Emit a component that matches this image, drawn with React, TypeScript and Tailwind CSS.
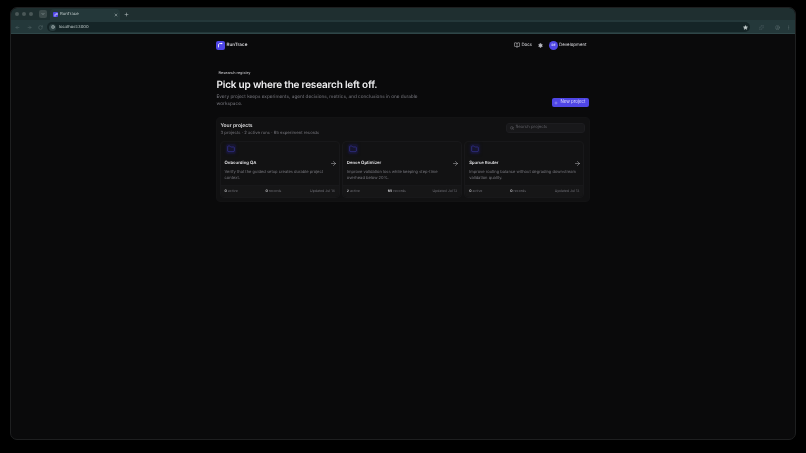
import React from "react";
import { ArrowRight, BookOpen, Folder, Plus, Search, Settings, Star, Globe, MoreVertical, RotateCw, ArrowLeft, X, ChevronDown, Puzzle, CircleUser } from "lucide-react";

const Logo = ({ s = "w-[9px] h-[9px]" }: { s?: string }) => (
  <svg viewBox="0 0 12 12" className={s} fill="none" stroke="white" strokeWidth="1.6" strokeLinecap="round">
    <path d="M3 10V6" />
    <path d="M3 6c0-2 1-3 3-3h3" />
    <circle cx="9" cy="3" r="0.6" fill="white" />
  </svg>
);

const projects = [
  { name: "Onboarding QA", desc: "Verify that the guided setup creates durable project\ncontext.", active: "0", rec: "0", date: "Updated Jul 14" },
  { name: "Dense Optimizer", desc: "Improve validation loss while keeping step-time\noverhead below 20%.", active: "2", rec: "65", date: "Updated Jul 13" },
  { name: "Sparse Router", desc: "Improve routing balance without degrading downstream\nvalidation quality.", active: "0", rec: "0", date: "Updated Jul 13" },
];

function Card({ p }: { p: (typeof projects)[number] }) {
  return (
    <div className="flex-1 min-w-0 rounded-[4px] border border-[#18181a] bg-[#121213] flex flex-col h-[57px]">
      <div className="flex-1 pl-[4px] pr-[3px] pt-[2px]">
        <div className="w-[10px] h-[10px] ml-[1px] rounded-[2px] bg-[#16152e] flex items-center justify-center mb-[5px] shadow-[0_0_3px_#16152e]">
          <Folder className="w-[8px] h-[8px] text-[#4540c4]" strokeWidth={1.5} />
        </div>
        <div className="flex items-center justify-between h-[10px]">
          <span className="text-[4.3px] pt-[2px] font-semibold text-[#e4e4e7]">{p.name}</span>
          <ArrowRight className="w-[7px] h-[7px] text-[#d4d4d8] -mr-[1px]" strokeWidth={1.5} />
        </div>
        <p className="text-[4.05px] leading-[6px] text-[#77777e] whitespace-pre-line">{p.desc}</p>
      </div>
      <div className="h-[12px] rounded-b-[4px] bg-[#161617] border-t border-[#18181a] flex items-center px-[4px] text-[3.5px] text-[#6f6f76]">
        <span className="w-[41px]"><b className="text-[#d4d4d8] font-semibold">{p.active}</b> active</span>
        <span><b className="text-[#d4d4d8] font-semibold">{p.rec}</b> records</span>
        <span className="ml-auto">{p.date}</span>
      </div>
    </div>
  );
}

export default function App() {
  return (
    <div className="w-[806px] h-[453px] bg-black overflow-hidden pt-[7px] px-[10px] font-['Inter',sans-serif] blur-[0.3px] [text-rendering:geometricPrecision]">
      <div className="w-[786px] h-[433px] rounded-[7px] border border-[#1e1f20] bg-[#0a0a0b] overflow-hidden flex flex-col">
        <div className="h-[12px] bg-[#1f2f30] flex items-end pl-[4px] gap-[2px] text-[#b7c2c2]">
          <div className="flex items-center gap-[3px] self-center mr-[4px]">
            <i className="block w-[4px] h-[4px] rounded-full bg-[#4a5757]" />
            <i className="block w-[4px] h-[4px] rounded-full bg-[#4a5757]" />
            <i className="block w-[4px] h-[4px] rounded-full bg-[#4a5757]" />
          </div>
          <div className="w-[8px] h-[8px] rounded-[2px] bg-[#3c4a4a] flex items-center justify-center self-center mr-[1px]">
            <ChevronDown className="w-[4px] h-[4px]" strokeWidth={3} />
          </div>
          <div className="w-[70px] h-[11px] rounded-t-[4px] bg-[#24383a] flex items-center pl-[3px] pr-[2px] gap-[2px]">
            <div className="w-[5px] h-[5px] rounded-[1px] bg-[#4f46e5] flex items-center justify-center"><Logo s="w-[4px] h-[4px]" /></div>
            <span className="flex-1 pt-[2px] text-[4.2px] text-[#c8d2d2]">RunTrace</span>
            <X className="w-[4px] h-[4px]" strokeWidth={3} />
          </div>
          <Plus className="w-[5px] h-[5px] self-center ml-[2px]" strokeWidth={2.5} />
        </div>
        <div className="h-[14px] pt-[1px] bg-[#24383a] flex items-center pl-[4px] pr-[4px] gap-[7px] text-[#5f7072] border-b border-[#2f4648]">
          <ArrowLeft className="w-[5px] h-[5px]" />
          <ArrowRight className="w-[5px] h-[5px]" />
          <RotateCw className="w-[5px] h-[5px] -ml-[1px]" />
          <div className="flex-1 h-[10px] rounded-full bg-[#152527] flex items-center pl-[2px] pr-[2px] gap-[3px] -ml-[3px]">
            <div className="w-[7px] h-[7px] rounded-full bg-[#2b3e40] flex items-center justify-center"><Globe className="w-[4px] h-[4px] text-[#c3cdcd]" /></div>
            <span className="flex-1 pt-[2px] text-[4.2px] text-[#c3cdcd]">localhost:3000</span>
            <Star className="w-[5px] h-[5px] text-[#c3cdcd] fill-[#c3cdcd]" />
          </div>
          <Puzzle className="w-[5px] h-[5px] ml-[2px]" />
          <CircleUser className="w-[5px] h-[5px] ml-[4px]" />
          <MoreVertical className="w-[5px] h-[5px] -ml-[1px]" />
        </div>
        <div className="flex-1 flex flex-col items-center">
          <div className="w-[374px] -ml-[1px]">
            <div className="h-[20px] flex items-center justify-between pr-[3px] mt-[1px] text-[#d4d4d8]">
              <div className="flex items-center gap-[2px]">
                <div className="w-[9px] h-[9px] rounded-[2px] bg-[#4f46e5] flex items-center justify-center"><Logo s="w-[6px] h-[6px]" /></div>
                <span className="pt-[2px] text-[4.6px] font-semibold text-[#d4d4d8]">RunTrace</span>
              </div>
              <div className="flex items-center text-[4.4px]">
                <BookOpen className="w-[6px] h-[6px] mr-[1px]" />
                <span className="pt-[2px]">Docs</span>
                <Settings className="w-[5px] h-[5px] ml-[6px]" fill="#a1a1aa" />
                <div className="w-[9px] h-[9px] rounded-full bg-[#4f46e5] ml-[6px] flex items-center justify-center text-[3px] font-bold text-[#dbdafc]">DE</div>
                <span className="ml-[1px] pt-[2px]">Development</span>
              </div>
            </div>
            <div className="mt-[15px] ml-[3px] text-[3.8px] font-medium text-[#c4c4c8]">Research registry</div>
            <div className="relative mt-[3px] pl-[1px]">
              <div className="w-[210px]">
                <h1 className="text-[10px] leading-[13px] font-semibold tracking-[-0.2px] text-[#f0f0f2]">Pick up where the research left off.</h1>
                <p className="text-[4.7px] leading-[7px] text-[#77777e] mt-[2px]">Every project keeps experiments, agent decisions, metrics, and conclusions in one durable workspace.</p>
              </div>
              <button className="absolute right-[1px] top-[19px] w-[37px] h-[9px] pt-[1px] rounded-[2px] bg-[#4f46e5] flex items-center justify-center gap-[2px] text-[4.4px] text-[#dcdbfb]">
                <Plus className="w-[4px] h-[4px]" />
                New project
              </button>
            </div>
            <section className="mt-[9px] h-[85px] w-[374px] rounded-[4px] bg-[#111112] border border-[#131314] pt-[4px] pl-[3px] pr-[4px] flex flex-col">
              <div className="flex items-start justify-between h-[19px] pl-[1px]">
                <div>
                  <div className="text-[5px] font-semibold leading-[8px] text-[#dcdcde]">Your projects</div>
                  <div className="text-[4.25px] leading-[6px] text-[#77777e] mt-[1px]">3 projects · 2 active runs · 65 experiment records</div>
                </div>
                <div className="w-[79px] h-[10px] rounded-[3px] bg-[#18181a] border border-[#1d1d20] flex items-center pl-[3px] gap-[2px] text-[4.3px] text-[#5e5e64] mt-[1px]">
                  <Search className="w-[4px] h-[4px] text-[#8a8a90]" />
                  <span className="pt-[2px]">Search projects</span>
                </div>
              </div>
              <div className="flex gap-[2px]">
                {projects.map((p) => <Card key={p.name} p={p} />)}
              </div>
            </section>
          </div>
        </div>
      </div>
    </div>
  );
}
